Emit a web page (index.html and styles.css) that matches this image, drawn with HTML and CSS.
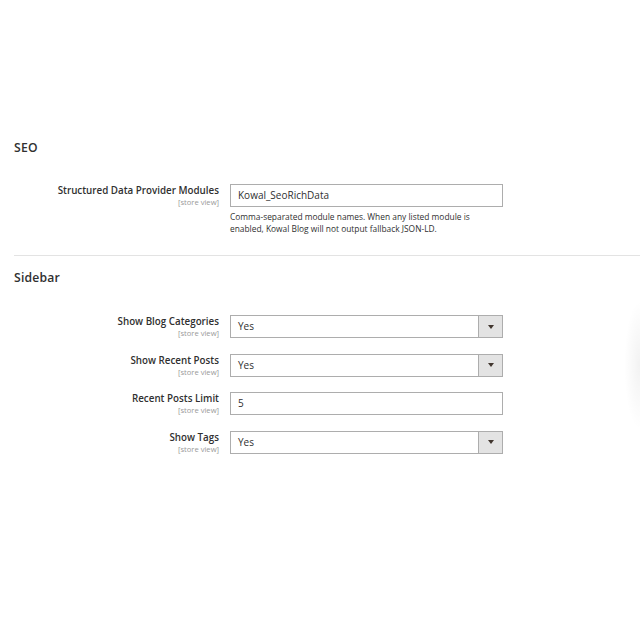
FILE: index.html
```html
<!DOCTYPE html>
<html>
<head>
<meta charset="utf-8">
<link rel="stylesheet" href="styles.css">
</head>
<body>
<div class="page">
  <section class="group group-seo">
    <h2 class="group-title">SEO</h2>
    <div class="fields">
      <div class="row">
        <div class="label">
          <span class="label-text">Structured Data Provider Modules</span>
          <span class="scope">[store view]</span>
        </div>
        <div class="control">
          <div class="input">Kowal_SeoRichData</div>
          <p class="note">Comma-separated module names. When any listed module is enabled, Kowal Blog will not output fallback JSON-LD.</p>
        </div>
      </div>
    </div>
  </section>
  <section class="group group-sidebar">
    <h2 class="group-title">Sidebar</h2>
    <div class="fields fields-sidebar">
      <div class="row">
        <div class="label">
          <span class="label-text">Show Blog Categories</span>
          <span class="scope">[store view]</span>
        </div>
        <div class="control">
          <div class="select"><span class="select-value">Yes</span><span class="select-btn"><span class="caret"></span></span></div>
        </div>
      </div>
      <div class="row">
        <div class="label">
          <span class="label-text">Show Recent Posts</span>
          <span class="scope">[store view]</span>
        </div>
        <div class="control">
          <div class="select"><span class="select-value">Yes</span><span class="select-btn"><span class="caret"></span></span></div>
        </div>
      </div>
      <div class="row">
        <div class="label">
          <span class="label-text">Recent Posts Limit</span>
          <span class="scope">[store view]</span>
        </div>
        <div class="control">
          <div class="input">5</div>
        </div>
      </div>
      <div class="row">
        <div class="label">
          <span class="label-text">Show Tags</span>
          <span class="scope">[store view]</span>
        </div>
        <div class="control">
          <div class="select"><span class="select-value">Yes</span><span class="select-btn"><span class="caret"></span></span></div>
        </div>
      </div>
    </div>
  </section>
</div>
<div class="edge-shadow"></div>
</body>
</html>
```

FILE: styles.css
```css
html, body {
  margin: 0;
  padding: 0;
  background: #ffffff;
}
body {
  font-family: "Open Sans", "Noto Sans", sans-serif;
  color: #303030;
  width: 640px;
  height: 640px;
  overflow: hidden;
  position: relative;
}
.page {
  padding: 134px 0 0 14px;
}
.group-title {
  margin: 0;
  font-size: 12.2px;
  font-weight: 600;
  line-height: 28px;
  color: #303030;
  letter-spacing: 0.2px;
}
.fields {
  display: flex;
  flex-direction: column;
  gap: 16px;
}
.group-seo .fields {
  padding-top: 22px;
  padding-bottom: 20px;
  border-bottom: 1px solid #e3e3e3;
}
.group-sidebar {
  padding-top: 8px;
}
.group-sidebar .fields {
  padding-top: 23px;
  gap: 15.5px;
}
.row {
  display: grid;
  grid-template-columns: 205px 273px;
  column-gap: 11px;
  align-items: start;
}
.label {
  display: flex;
  flex-direction: column;
  align-items: flex-end;
  text-align: right;
  padding-top: 0;
}
.label-text {
  font-size: 9.8px;
  font-weight: 600;
  line-height: 13px;
  color: #303030;
}
.scope {
  font-size: 7.6px;
  line-height: 10px;
  color: #999999;
}
.input, .select {
  box-sizing: border-box;
  height: 23px;
  border: 1px solid #adadad;
  background: #fff;
  font-size: 10px;
  line-height: 21px;
  color: #303030;
}
.input {
  padding: 0 7px;
}
.select {
  display: flex;
}
.select-value {
  flex: 1;
  padding: 0 7px;
}
.select-btn {
  width: 23px;
  background: #e3e3e3;
  border-left: 1px solid #adadad;
  display: flex;
  align-items: center;
  justify-content: center;
}
.caret {
  width: 0;
  height: 0;
  border-left: 3px solid transparent;
  border-right: 3px solid transparent;
  border-top: 4px solid #41362f;
}
.note {
  margin: 4px 0 0;
  font-size: 8.4px;
  line-height: 12px;
  color: #303030;
}
.edge-shadow {
  position: absolute;
  right: 0;
  top: 300px;
  width: 16px;
  height: 130px;
  background: radial-gradient(ellipse at right center, rgba(0,0,0,0.05), rgba(0,0,0,0) 70%);
}
```
